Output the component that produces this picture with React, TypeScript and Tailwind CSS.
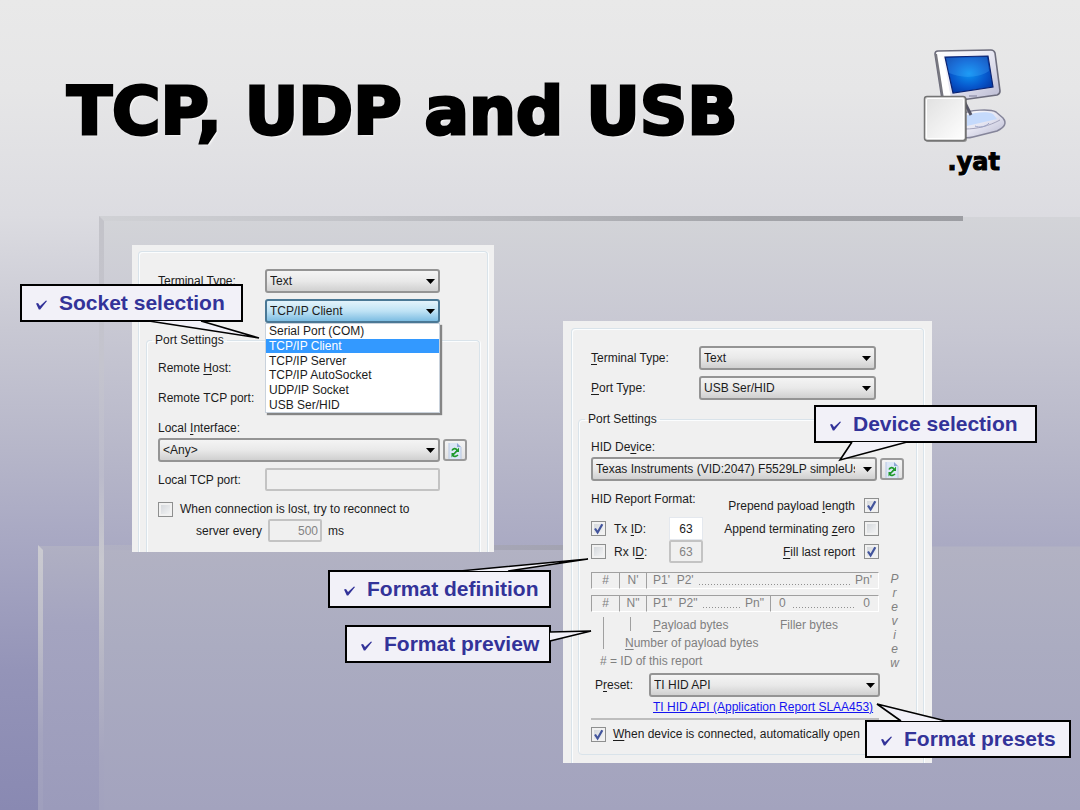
import React from "react";

type Point = [number, number];

/** Draws a label whose access key is underlined: "Remote |H|ost:" */
function Mnemonic({ text }: { text: string }) {
  const [before, key, after] = text.split("|");
  return (
    <>
      {before}
      {key && <u className="underline-offset-2">{key}</u>}
      {after}
    </>
  );
}

function Combo({
  id,
  value,
  label,
  active = false,
}: {
  id: string;
  value: string;
  label?: string;
  active?: boolean;
}) {
  const face = active
    ? "border-[#4a7895] bg-linear-to-b from-[#e3f3fb] via-[#bfe3f5] via-50% to-[#7dbde2]"
    : "border-[#949494] bg-linear-to-b from-[#f4f4f4] via-[#e9e9e9] via-50% to-[#d0d0d0]";
  return (
    <span className="relative block w-full min-w-0">
      <select
        id={id}
        aria-label={label}
        defaultValue={value}
        className={`block h-6 w-full appearance-none rounded-[3px] border-2 pl-[3px] pr-5 text-xs text-[#1c1c1c] ${face}`}
      >
        <option>{value}</option>
      </select>
      <svg
        viewBox="0 0 9 5"
        className="pointer-events-none absolute right-[5px] top-[10px] h-[5px] w-[9px]"
      >
        <path d="M0 0h9L4.500 5z" fill="#000" />
      </svg>
    </span>
  );
}

function Tick({ id, checked = false }: { id: string; checked?: boolean }) {
  return (
    <span className="relative block size-[15px] shrink-0">
      <input
        id={id}
        type="checkbox"
        defaultChecked={checked}
        className="peer block size-[15px] appearance-none border border-[#8e8f8f] bg-linear-to-br from-[#cfd3d8] to-[#f8f8f8] shadow-[inset_0_0_0_2px_#f1f1f1]"
      />
      <svg
        viewBox="0 0 15 15"
        className="pointer-events-none absolute inset-0 hidden size-[15px] peer-checked:block"
      >
        <path
          d="M4 7.500 6.600 11.500 11.300 3.200"
          fill="none"
          stroke="#42549c"
          strokeWidth="2.200"
        />
      </svg>
    </span>
  );
}

function RefreshButton() {
  return (
    <button
      type="button"
      aria-label="Refresh"
      className="flex h-[22px] w-6 shrink-0 items-center justify-center rounded-[3px] border-2 border-[#9a9a9a] bg-linear-to-b from-[#f4f4f4] to-[#e2e2e2]"
    >
      <svg viewBox="0 0 16 17" className="h-[17px] w-4 shrink-0">
        <path d="M2 1h8l4 4v12H2z" fill="#dbe6f6" />
        <path d="M10 1v4h4z" fill="#8ea8d4" />
        <path d="M2 1v16M14 5v12" stroke="#b9c8e2" fill="none" />
        <path
          d="M5 8.500C6 6.300 9 5.800 10 8.500C10 10 6 11.500 6 13.500C7 15 9.500 14.500 11 13"
          fill="none"
          stroke="#1f9a2b"
          strokeWidth="1.600"
        />
        <path d="M12 5.500V10H8zM4.500 15.500V11h4z" fill="#1f9a2b" />
      </svg>
    </button>
  );
}

/** A boxed note with a pointed tail; tail points are measured from the box corner. */
function Callout({
  text,
  place,
  tail,
}: {
  text: string;
  place: string;
  tail: [Point, Point, Point];
}) {
  const points = tail.map((p) => p.join(",")).join(" ");
  return (
    <div
      className={`absolute z-20 flex items-center border-2 border-black bg-[#f2f1f8] pl-[14px] ${place}`}
    >
      <svg
        width="1"
        height="1"
        className="absolute -left-[2px] -top-[2px] overflow-visible"
      >
        <polygon points={points} fill="#f2f1f8" />
        <polyline points={points} fill="none" stroke="#000" strokeWidth="1.600" />
      </svg>
      <svg viewBox="0 0 11 10" className="relative mt-1 h-[10px] w-[11px] shrink-0">
        <path d="M0 3.500 2 3 4 6 10 0.500 11 1 4.200 9.500 2.800 9.500z" fill="#333399" />
      </svg>
      <span className="relative ml-3 whitespace-nowrap text-[21px] leading-7 font-bold text-[#333399]">
        {text}
      </span>
    </div>
  );
}

const frameLine = "border-[#d9e3ea] shadow-[inset_1px_1px_0_#fbfdfe,1px_0_0_#fbfdfe]";
const readOnlyBox =
  "block h-[23px] rounded-[2px] border-2 border-[#c3c3c3] bg-[#f0f0f0] px-1 text-[#838383]";

const ports = [
  "Serial Port (COM)",
  "TCP/IP Client",
  "TCP/IP Server",
  "TCP/IP AutoSocket",
  "UDP/IP Socket",
  "USB Ser/HID",
];

function SocketPanel() {
  return (
    <section className="relative min-w-0 flex-[362_1_0%]">
      <form className="bg-[#f0f0f0] px-[6px] pt-[6px] text-xs leading-4 text-[#1c1c1c]">
        <div className={`rounded-t-[4px] border border-b-0 px-[7px] pt-[17px] ${frameLine}`}>
          <div className="grid grid-cols-[107px_1fr] items-center gap-y-[6px] pl-3 pr-[40px]">
            <label htmlFor="term-a">Terminal Type:</label>
            <Combo id="term-a" value="Text" />
            <div className="relative col-start-2">
              <Combo id="port-a" label="Port" value="TCP/IP Client" active />
              <ul
                role="listbox"
                aria-label="Ports"
                className="absolute inset-x-0 top-6 z-10 grid h-[90px] grid-rows-6 border border-[#c9d2dc] bg-white shadow-[2px_2px_1px_#858585]"
              >
                {ports.map((port) => (
                  <li
                    key={port}
                    role="option"
                    aria-selected={port === "TCP/IP Client"}
                    className="flex items-center pl-[3px] leading-none aria-selected:bg-[#3399ff] aria-selected:text-white"
                  >
                    {port}
                  </li>
                ))}
              </ul>
            </div>
          </div>
          <fieldset
            className={`mt-[9px] rounded-t-[4px] border border-b-0 pb-[10px] pl-[11px] pr-3 ${frameLine}`}
          >
            <legend className="-ml-[6px] px-[3px]">Port Settings</legend>
            <div className="mt-2 grid grid-cols-[107px_1fr] items-center gap-y-[7px] pr-[27px]">
              <label htmlFor="host">
                <Mnemonic text="Remote |H|ost:" />
              </label>
              <input id="host" className={`${readOnlyBox} w-full`} />
              <label htmlFor="rport">Remote TCP port:</label>
              <input id="rport" className={`${readOnlyBox} w-full`} />
            </div>
            <label htmlFor="iface" className="mt-[11px] block">
              <Mnemonic text="Local |I|nterface:" />
            </label>
            <div className="mt-[2px] flex items-center gap-[3px]">
              <Combo id="iface" value="<Any>" />
              <RefreshButton />
            </div>
            <div className="mt-[6px] grid grid-cols-[107px_1fr] items-center pr-[27px]">
              <label htmlFor="lport">Local TCP port:</label>
              <input id="lport" disabled className={`${readOnlyBox} w-full`} />
            </div>
            <div className="mt-[10px] flex items-center gap-[7px]">
              <Tick id="retry" />
              <label htmlFor="retry" className="whitespace-nowrap">
                When connection is lost, try to reconnect to
              </label>
            </div>
            <div className="mt-[2px] flex items-center gap-[6px] pl-[38px]">
              <label htmlFor="every">server every</label>
              <input
                id="every"
                disabled
                defaultValue="500"
                className={`${readOnlyBox} w-[54px] px-[2px] text-right`}
              />
              <span>ms</span>
            </div>
          </fieldset>
        </div>
      </form>
      <Callout
        text="Socket selection"
        place="-left-[112px] top-[39px] h-[38px] w-[223px]"
        tail={[[129, 37], [239, 54], [181, 37]]}
      />
    </section>
  );
}

const cell =
  "h-[17px] border-l border-t border-[#a0a0a0] border-b border-b-white p-0 font-normal leading-[15px]";
const dots =
  "mt-[7px] h-px flex-1 bg-[repeating-linear-gradient(90deg,#909090_0_1px,transparent_1px_3px)]";

function ReportPreview() {
  return (
    <div className="mt-[9px] flex text-[#808080]">
      <div className="min-w-0 flex-1">
        <table className="w-full table-fixed border-separate border-spacing-0 text-center">
          <colgroup>
            <col className="w-[28px]" />
            <col className="w-[27px]" />
            <col />
            <col className="w-[109px]" />
          </colgroup>
          <tbody>
            <tr>
              <td className={cell}>#</td>
              <td className={cell}>N'</td>
              <td className={`${cell} border-r border-r-white px-[6px]`} colSpan={2}>
                <div className="flex items-center justify-between gap-[5px] whitespace-nowrap">
                  <span className="whitespace-pre">P1'  P2'</span>
                  <span className={dots} />
                  <span>Pn'</span>
                </div>
              </td>
            </tr>
            <tr>
              <td className="h-[6px] p-0" colSpan={4} />
            </tr>
            <tr>
              <td className={cell}>#</td>
              <td className={cell}>N"</td>
              <td className={`${cell} px-[6px]`}>
                <div className="flex items-center justify-between gap-[5px] whitespace-nowrap">
                  <span className="whitespace-pre">P1"  P2"</span>
                  <span className={dots} />
                  <span>Pn"</span>
                </div>
              </td>
              <td className={`${cell} border-r border-r-white px-2`}>
                <div className="flex items-center justify-between gap-[7px]">
                  <span>0</span>
                  <span className={dots} />
                  <span>0</span>
                </div>
              </td>
            </tr>
          </tbody>
        </table>
        <div className="mt-[5px] flex">
          <i className="ml-[12px] block h-8 w-px bg-[#a0a0a0]" />
          <div className="ml-[21px] flex-1">
            <div className="flex">
              <i className="ml-[5px] block h-[14px] w-px bg-[#a0a0a0]" />
              <span className="ml-[22px] w-[127px]">
                <Mnemonic text="|P|ayload bytes" />
              </span>
              <span>Filler bytes</span>
            </div>
            <div className="mt-[2px]">
              <Mnemonic text="|N|umber of payload bytes" />
            </div>
          </div>
        </div>
        <div className="mt-[2px] pl-[9px]"># = ID of this report</div>
      </div>
      <div
        aria-label="Preview"
        className="flex w-[31px] flex-col items-center italic leading-[14px]"
      >
        {"Preview".split("").map((letter, i) => (
          <span key={i}>{letter}</span>
        ))}
      </div>
    </div>
  );
}

function OptionRow({
  id,
  text,
  checked,
}: {
  id: string;
  text: string;
  checked?: boolean;
}) {
  return (
    <div className="flex h-[23px] items-center justify-end gap-[9px]">
      <label htmlFor={id} className="whitespace-nowrap">
        <Mnemonic text={text} />
      </label>
      <Tick id={id} checked={checked} />
    </div>
  );
}

function HidPanel() {
  return (
    <section className="relative mt-[76px] min-w-0 flex-[369_1_0%]">
      <form className="bg-[#f0f0f0] px-[8px] pt-[7px] text-xs leading-4 text-[#1c1c1c]">
        <div
          className={`rounded-t-[4px] border border-b-0 px-[6px] pb-2 pt-[17px] ${frameLine}`}
        >
          <div className="grid grid-cols-[108px_1fr] items-center gap-y-[6px] pl-[13px] pr-[41px]">
            <label htmlFor="term-b">
              <Mnemonic text="|T|erminal Type:" />
            </label>
            <Combo id="term-b" value="Text" />
            <label htmlFor="port-b">
              <Mnemonic text="|P|ort Type:" />
            </label>
            <Combo id="port-b" value="USB Ser/HID" />
          </div>
          <fieldset
            className={`mt-[11px] rounded-[4px] border pb-[11px] pl-3 pr-[6px] ${frameLine}`}
          >
            <legend className="-ml-[6px] px-[3px]">Port Settings</legend>
            <label htmlFor="device" className="mt-3 block">
              <Mnemonic text="HID De|v|ice:" />
            </label>
            <div className="mt-[2px] flex items-center gap-[3px] pr-[6px]">
              <Combo id="device" value="Texas Instruments (VID:2047) F5529LP simpleUsb" />
              <RefreshButton />
            </div>
            <div className="mt-[10px] flex justify-between pr-[31px]">
              <div>
                <div>HID Report Format:</div>
                <div className="mt-[10px] flex h-[23px] items-center">
                  <Tick id="tx" checked />
                  <label htmlFor="tx" className="ml-2 w-[55px]">
                    <Mnemonic text="Tx |I|D:" />
                  </label>
                  <input
                    aria-label="Tx ID value"
                    defaultValue="63"
                    className="block h-[23px] w-[34px] border border-[#e4e8ee] bg-white text-center text-[#1c1c1c]"
                  />
                </div>
                <div className="flex h-[23px] items-center">
                  <Tick id="rx" />
                  <label htmlFor="rx" className="ml-2 w-[55px]">
                    <Mnemonic text="Rx I|D|:" />
                  </label>
                  <input
                    aria-label="Rx ID value"
                    defaultValue="63"
                    disabled
                    className="block h-[23px] w-[34px] rounded-[2px] border-2 border-[#c3c3c3] bg-[#f0f0f0] text-center text-[#838383]"
                  />
                </div>
              </div>
              <div className="mt-[3px]">
                <OptionRow id="prepend" text="Prepend payload |l|ength" checked />
                <OptionRow id="append" text="Append terminating |z|ero" />
                <OptionRow id="fill" text="|F|ill last report" checked />
              </div>
            </div>
            <ReportPreview />
            <div className="mt-[3px] grid grid-cols-[58px_1fr] items-center pr-[30px]">
              <label htmlFor="preset" className="pl-1">
                <Mnemonic text="P|r|eset:" />
              </label>
              <Combo id="preset" value="TI HID API" />
              <a
                href="#slaa453"
                className="col-start-2 mt-[2px] whitespace-nowrap pl-[4px] text-[#1414f0] underline"
              >
                TI HID API (Application Report SLAA453)
              </a>
            </div>
            <hr className="mr-[31px] mt-[3px] border-t-2 border-[#bdbdbd]" />
            <div className="mt-[5px] flex h-[18px] items-center gap-[7px]">
              <Tick id="auto" checked />
              <label htmlFor="auto" className="whitespace-nowrap">
                <Mnemonic text="|W|hen device is connected, automatically open" />
              </label>
            </div>
          </fieldset>
        </div>
      </form>
      <Callout
        text="Device selection"
        place="left-[251px] top-[84px] h-[38px] w-[223px]"
        tail={[[38, 37], [26, 55], [93, 37]]}
      />
      <Callout
        text="Format definition"
        place="-left-[235px] top-[249px] h-[38px] w-[223px]"
        tail={[[132, 1], [260, -11], [180, 1]]}
      />
      <Callout
        text="Format preview"
        place="-left-[218px] top-[304px] h-[38px] w-[206px]"
        tail={[[205, 7], [246, 6], [205, 16]]}
      />
      <Callout
        text="Format presets"
        place="left-[302px] top-[399px] h-[38px] w-[206px]"
        tail={[[36, 1], [12, -16], [81, 1]]}
      />
    </section>
  );
}

function ComputerIcon() {
  return (
    <svg viewBox="0 0 84 96" className="h-24 w-[84px]" aria-hidden="true">
      <defs>
        <linearGradient id="case" x1="0" y1="0" x2="1" y2="1">
          <stop offset="0" stopColor="#ffffff" />
          <stop offset="0.500" stopColor="#e6e6f2" />
          <stop offset="1" stopColor="#b8b8d0" />
        </linearGradient>
        <radialGradient id="screen" cx="0.500" cy="0.480" r="0.650">
          <stop offset="0" stopColor="#0c93f2" />
          <stop offset="0.550" stopColor="#0758cd" />
          <stop offset="1" stopColor="#04309c" />
        </radialGradient>
        <linearGradient id="sheet" x1="0" y1="0" x2="1" y2="1">
          <stop offset="0" stopColor="#e0e0e0" />
          <stop offset="1" stopColor="#ffffff" />
        </linearGradient>
      </defs>
      <path
        d="M38 66C46 60 68 60 73 63L80 69C84 74 82 78 74 82L50 88C42 90 34 88 34 84z"
        fill="url(#case)"
        stroke="#85859a"
        strokeWidth="1.500"
      />
      <path d="M44 66C52 63 66 62 70 65L74 70 44 77z" fill="#c5dafc" />
      <path d="M42 80C54 80 66 77 77 71" fill="none" stroke="#a5a5bd" />
      <path d="M52 77C56 79 63 78 66 74" fill="none" stroke="#9ca4c8" />
      <path d="M40 50 48 66" stroke="#555566" strokeWidth="3" />
      <path
        d="M12 5Q12 2 15 2L68 1Q71 1 72 4L77 42Q77 45 74 46L24 53Q20 53 19 50z"
        fill="url(#case)"
        stroke="#6c6c7c"
        strokeWidth="1.600"
      />
      <path d="M14 7 21 50 28 49 20 8z" fill="#ffffff" />
      <path d="M13 5 20 50" stroke="#77777f" strokeWidth="2" />
      <path d="M22 8 65 7 70 38 30 44z" fill="url(#screen)" stroke="#0c2472" strokeWidth="1.200" />
      <path d="M23 9 64 8 66 22C54 30 37 29 26 24z" fill="#4eb3ff" opacity="0.280" />
      <path d="M46 47h8" stroke="#9a9ab2" strokeWidth="1.500" />
      <rect
        x="2"
        y="48"
        width="42"
        height="45"
        rx="3"
        fill="#555"
        opacity="0.550"
      />
      <rect
        x="1.500"
        y="47.500"
        width="41"
        height="44"
        rx="2.500"
        fill="url(#sheet)"
        stroke="#747474"
        strokeWidth="1.500"
      />
      <rect x="3.500" y="49.500" width="37" height="40" rx="1.500" fill="none" stroke="#fff" />
    </svg>
  );
}

function Backdrop() {
  return (
    <div
      aria-hidden="true"
      className="absolute inset-0 -z-10 overflow-hidden bg-[linear-gradient(#e9e9e9_0,#e6e6e7_90px,#dcdce1_215px,#c8c8d3_330px,#b6b6c9_450px,#a8a8c3_540px,#9494b8_670px,#8989b2_810px)]"
    >
      <div className="absolute bottom-0 left-[38px] right-0 top-[546px] bg-[linear-gradient(#b0b0c3_0,#a4a4c0_80px,#9b9bbb_264px)]" />
      <div className="absolute bottom-0 left-[99px] right-0 top-[217px] bg-[linear-gradient(#d3d4d8_0,#c8c8d3_110px,#b5b5c8_250px,#aaaac3_329px,#b2b2c3_330px,#abacc1_430px,#a3a3be_593px)]" />
      <div className="absolute bottom-0 left-[38px] top-[545px] w-[5px] bg-[linear-gradient(#cbcbd1_0,#bfbfca_80px,#a4a4bf_190px,#9f9fbd_264px)] [clip-path:polygon(0_0,100%_5px,100%_100%,0_100%)]" />
      <div className="absolute bottom-0 left-[99px] top-[216px] w-[5px] bg-[linear-gradient(#c3c3c9_0,#c4c4ce_150px,#bbbbcb_260px,#c8c8cf_345px,#b8b8c6_430px,#a5a5bf_540px,#a2a2be_593px)]" />
      <div className="absolute left-[99px] top-[216px] h-[5px] w-[864px] bg-[linear-gradient(90deg,#d0d1d5_0,#c2c3c8_30%,#a3a4a9_75%,#9c9da2_100%)] [clip-path:polygon(0_0,100%_0,100%_100%,5px_100%)]" />
      <div className="absolute left-[104px] top-[545px] h-[5px] w-[799px] bg-[linear-gradient(90deg,#b0b0c3_0,#a9a9ba_40%,#9b9ba6_80%)]" />
    </div>
  );
}

export default function App() {
  return (
    <main className="relative isolate min-h-screen overflow-hidden pb-[47px] font-['Liberation_Sans',Arial,sans-serif]">
      <Backdrop />
      <header className="flex items-start justify-between pl-[67px] pr-[73px] pt-[49px] font-['DejaVu_Sans',sans-serif] font-bold text-black">
        <h1 className="mt-[30px] whitespace-nowrap text-[66px] leading-[66px] [-webkit-text-stroke:3px_#000] [text-shadow:2px_2px_2px_#ffffff]">
          TCP, UDP and USB
        </h1>
        <div className="flex flex-col items-end">
          <ComputerIcon />
          <span className="mr-[7px] mt-px text-2xl leading-8 [-webkit-text-stroke:1px_#000] [text-shadow:1px_1px_1px_#ffffff]">
            .yat
          </span>
        </div>
      </header>
      <div className="mt-[67px] flex items-start gap-[69px] pl-[132px] pr-[148px]">
        <SocketPanel />
        <HidPanel />
      </div>
    </main>
  );
}
